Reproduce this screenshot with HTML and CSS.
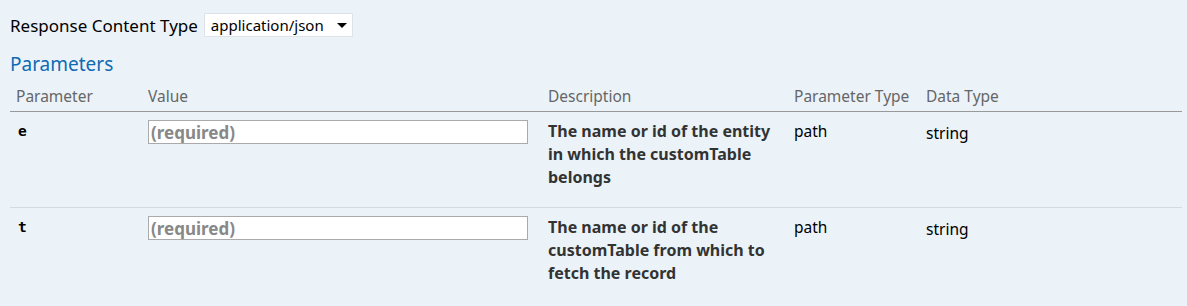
FILE: index.html
```html
<!DOCTYPE html>
<html lang="en">
<head>
    <meta charset="UTF-8">
    <title>Swagger Operation</title>
    <link rel="stylesheet" href="styles.css">
</head>
<body>

<div class="content">
    <!-- Response type -->
    <div class="response-type">
        <label>Response Content Type</label>
        <div class="select">
            <span>application/json</span>
            <span class="caret"></span>
        </div>
    </div>

    <!-- Parameters -->
    <h4>Parameters</h4>
    <table class="params">
        <thead>
            <tr>
                <th class="col-name">Parameter</th>
                <th class="col-value">Value</th>
                <th class="col-desc">Description</th>
                <th class="col-ptype">Parameter Type</th>
                <th>Data Type</th>
            </tr>
        </thead>
        <tbody>
            <tr>
                <td class="code">e</td>
                <td><input type="text" placeholder="(required)"></td>
                <td class="markdown"><p>The name or id of the entity in which the customTable belongs</p></td>
                <td>path</td>
                <td class="model">string</td>
            </tr>
            <tr>
                <td class="code">t</td>
                <td><input type="text" placeholder="(required)"></td>
                <td class="markdown"><p>The name or id of the customTable from which to fetch the record</p></td>
                <td>path</td>
                <td class="model">string</td>
            </tr>
        </tbody>
    </table>
</div>

</body>
</html>
```

FILE: styles.css
```css
/* Reset */
* {
    margin: 0;
    padding: 0;
    box-sizing: border-box;
}

body {
    background-color: #ebf3f9;
    font-family: 'Noto Sans', 'Open Sans', sans-serif;
    color: #000;
    font-size: 15px;
}

.content {
    padding: 10px 5px 0 10px;
}

/* Response Content Type */
.response-type {
    display: flex;
    align-items: center;
    gap: 6px;
    height: 30px;
}

.response-type label {
    font-size: 17px;
}

.select {
    display: flex;
    align-items: center;
    justify-content: space-between;
    width: 149px;
    height: 24px;
    padding: 0 5px 0 6px;
    background: #fff;
    border: 1px solid #dde3e8;
    font-size: 15px;
}

.caret {
    width: 0;
    height: 0;
    border-left: 5px solid transparent;
    border-right: 5px solid transparent;
    border-top: 5px solid #000;
}

/* Heading */
h4 {
    color: #0f6ab4;
    font-size: 19px;
    font-weight: normal;
    margin-top: 12px;
    line-height: 24px;
}

/* Table */
.params {
    width: 100%;
    border-collapse: collapse;
    margin-top: 4px;
}

.params th {
    text-align: left;
    font-weight: normal;
    color: #666;
    font-size: 15.5px;
    padding: 6px 6px 5px;
    border-bottom: 1px solid #999;
    line-height: 20px;
}

.col-name { width: 132px; }
.col-value { width: 400px; }
.col-desc { width: 246px; }
.col-ptype { width: 132px; }

.params td {
    vertical-align: top;
    padding: 8px 6px 0;
    font-size: 15.5px;
    line-height: 23px;
}

.params td.model {
    padding-top: 10px;
}

.params tbody tr {
    border-bottom: 1px solid #d6dbdf;
}

.params tbody tr:last-child {
    border-bottom: none;
}

.params td.code {
    font-family: 'DejaVu Sans Mono', monospace;
    font-weight: bold;
    font-size: 14.5px;
    padding-left: 8px;
}

.params input {
    width: 380px;
    height: 24px;
    padding: 0 2px;
    border: 1px solid #aaa;
    font-family: 'Noto Sans', sans-serif;
    font-size: 17px;
    font-weight: bold;
    font-style: normal;
    outline: none;
}

.params input::placeholder {
    color: #888;
    font-style: normal;
}

.markdown p {
    font-weight: bold;
    color: #333;
    font-size: 16px;
    margin-bottom: 18px;
}
```
